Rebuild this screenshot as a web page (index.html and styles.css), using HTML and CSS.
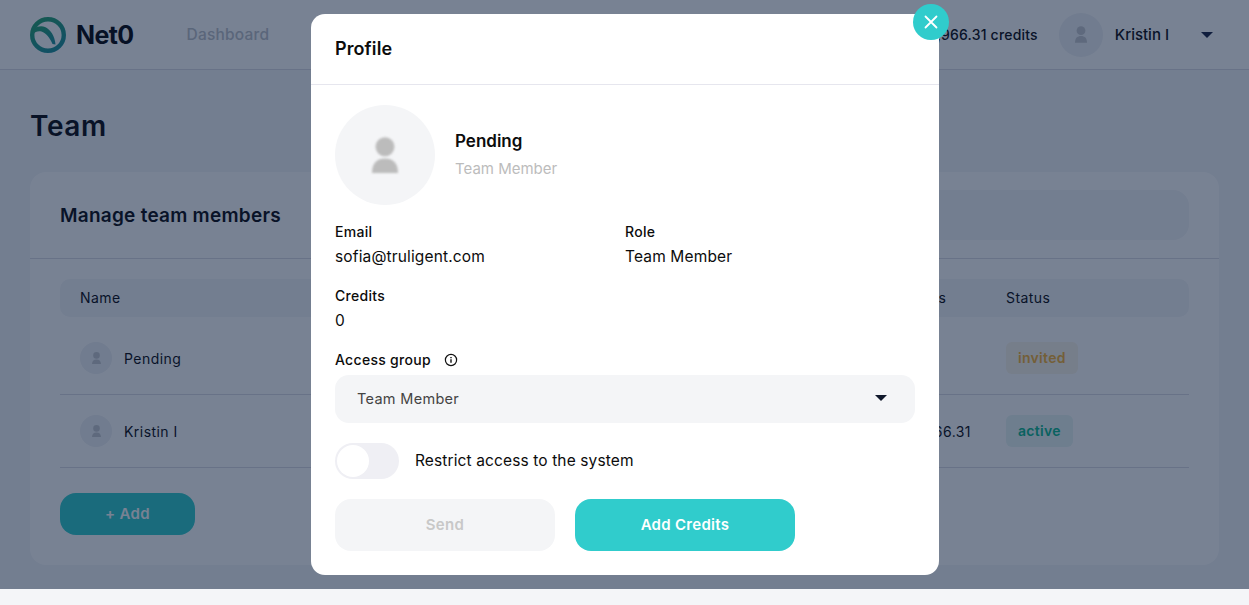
FILE: index.html
```html
<!DOCTYPE html>
<html lang="en">
<head>
<meta charset="utf-8">
<title>Net0 Team</title>
<link rel="stylesheet" href="styles.css">
</head>
<body>
<div class="page">
  <header class="topbar">
    <div class="brand">
      <svg class="logo" viewBox="0 0 36 36" width="36" height="36" fill="none">
        <defs><linearGradient id="lg" x1="0.2" y1="0" x2="0.8" y2="1"><stop offset="0" stop-color="#25a36f"/><stop offset="1" stop-color="#1c8f9c"/></linearGradient></defs>
        <circle cx="18" cy="18" r="15.800" stroke="url(#lg)" stroke-width="4.400"/>
        <path d="M2 13C6 9.500 11 8.500 15 10C20 12 25 19 25.500 27.500L22.500 27C20 21 16 16 11.500 14.500C8 13.500 5 15 3 17Z" fill="url(#lg)"/>
      </svg>
      <span class="brand-name">Net0</span>
    </div>
    <nav class="nav"><span>Dashboard</span></nav>
    <div class="account">
      <span class="credits">12,966.31 credits</span>
      <span class="avatar avatar-lg"><svg viewBox="0 0 26 36" width="12" height="17"><circle cx="13" cy="9.700" r="9.500"/><path d="M0 36C0 26 5 21.500 13 21.500S26 26 26 36z"/></svg></span>
      <span class="user-name">Kristin I</span>
      <span class="caret caret-dark"></span>
    </div>
  </header>
  <main class="content">
    <h1 class="page-title">Team</h1>
    <section class="card">
      <div class="card-head">
        <h2 class="card-title">Manage team members</h2>
        <div class="search"></div>
      </div>
      <div class="table">
        <div class="row row-head">
          <span class="col-name">Name</span>
          <span class="col-credits">Credits</span>
          <span class="col-status">Status</span>
        </div>
        <div class="row">
          <span class="col-name person"><span class="avatar"><svg viewBox="0 0 26 36" width="9" height="12.500"><circle cx="13" cy="9.700" r="9.500"/><path d="M0 36C0 26 5 21.500 13 21.500S26 26 26 36z"/></svg></span>Pending</span>
          <span class="col-credits"></span>
          <span class="col-status"><span class="pill pill-invited">invited</span></span>
        </div>
        <div class="row">
          <span class="col-name person"><span class="avatar"><svg viewBox="0 0 26 36" width="9" height="12.500"><circle cx="13" cy="9.700" r="9.500"/><path d="M0 36C0 26 5 21.500 13 21.500S26 26 26 36z"/></svg></span>Kristin I</span>
          <span class="col-credits">412,966.31</span>
          <span class="col-status"><span class="pill pill-active">active</span></span>
        </div>
      </div>
      <button class="add-btn">+ Add</button>
    </section>
  </main>

  <div class="overlay">
    <div class="modal">
      <button class="close" aria-label="Close"><svg viewBox="0 0 14 14" width="14" height="14" fill="none" stroke="#fff" stroke-width="1.800" stroke-linecap="round"><path d="M1.500 1.500l11 11M12.500 1.500l-11 11"/></svg></button>
      <div class="modal-head">Profile</div>
      <div class="modal-body">
        <div class="profile">
          <span class="big-avatar"><svg viewBox="0 0 26 36" width="26" height="36"><circle cx="13" cy="9.700" r="9.500"/><path d="M0 36C0 26 5 21.500 13 21.500S26 26 26 36z"/></svg></span>
          <div class="profile-text">
            <div class="profile-name">Pending</div>
            <div class="profile-role">Team Member</div>
          </div>
        </div>
        <div class="fields">
          <div class="field"><div class="label">Email</div><div class="value">sofia@truligent.com</div></div>
          <div class="field"><div class="label">Role</div><div class="value">Team Member</div></div>
          <div class="field"><div class="label">Credits</div><div class="value">0</div></div>
        </div>
        <div class="label access">Access group
          <svg class="info" viewBox="0 0 14 14" width="14" height="14" fill="none" stroke="#111" stroke-width="1.200"><circle cx="7" cy="7" r="5.600"/><path d="M7 6.200v3.600" stroke-width="1.400"/><path d="M7 4v1.300" stroke-width="1.400"/></svg>
        </div>
        <div class="select"><span>Team Member</span><span class="caret"></span></div>
        <div class="toggle-row">
          <span class="toggle"><span class="knob"></span></span>
          <span class="toggle-label">Restrict access to the system</span>
        </div>
        <div class="actions">
          <button class="btn btn-off">Send</button>
          <button class="btn btn-on">Add Credits</button>
        </div>
      </div>
    </div>
  </div>
</div>
</body>
</html>
```
FILE: styles.css
```css
* { box-sizing: border-box; }
html, body { margin: 0; padding: 0; }
body {
  height: 605px;
  overflow: hidden;
  background: #f4f5f8;
  color: #0a0a10;
  font-family: Inter, "Liberation Sans", sans-serif;
}
button { font-family: inherit; border: 0; }
.page { position: relative; height: 589px; }

.topbar {
  height: 70px;
  display: flex;
  align-items: center;
  padding: 0 36px 0 30px;
  border-bottom: 1px solid #dcdce5;
  background: #fff;
}
.brand { display: flex; align-items: center; gap: 10px; }
.brand-name { font-size: 25px; font-weight: 700; letter-spacing: -0.6px; color: #05060c; }
.nav { margin-left: 53px; font-size: 15.500px; font-weight: 500; letter-spacing: 0.2px; color: #bdc1c8; flex: 1; }
.account { display: flex; align-items: center; font-size: 14px; font-weight: 500; }
.credits { margin-right: 21px; letter-spacing: 0.2px; }
.avatar {
  width: 32px; height: 32px; border-radius: 50%;
  display: inline-flex; align-items: center; justify-content: center;
  background: #eff1f5;
  fill: #c6c8ce;
  flex: none;
}
.avatar-lg { width: 44px; height: 44px; }
.user-name { margin-left: 12px; margin-right: 32px; font-size: 15px; }
.caret {
  display: inline-block; width: 0; height: 0;
  border-left: 6.500px solid transparent;
  border-right: 6.500px solid transparent;
  border-top: 6px solid #10182b;
}
.caret-dark { border-top-color: #1a2244; }

.content { padding: 38px 30px 0; }
.page-title { margin: 0 0 28px; font-size: 28px; line-height: 36px; font-weight: 600; letter-spacing: 0.6px; }
.card { background: #fff; border-radius: 16px; height: 393px; }
.card-head {
  display: flex; align-items: center; justify-content: space-between;
  height: 87px; padding: 0 30px;
  border-bottom: 1px solid #dcdce5;
}
.card-title { margin: 0; font-size: 19px; font-weight: 600; letter-spacing: 0.25px; }
.search { width: 874px; height: 50px; background: #f4f5f8; border-radius: 16px; }
.table { padding: 20px 30px 0; font-size: 14px; letter-spacing: 0.45px; }
.row {
  display: flex; align-items: center; height: 73px;
  padding: 0 20px;
  border-bottom: 1px solid #dcdce5;
}
.row-head { height: 38px; background: #f4f5f8; border: 0; border-radius: 10px; margin-bottom: 5px; padding-bottom: 1px; }
.col-name { flex: 1; }
.person { display: flex; align-items: center; gap: 12px; }
.col-credits { width: 112px; padding-left: 2px; white-space: nowrap; }
.col-status { width: 163px; }
.pill { display: inline-block; height: 32px; line-height: 32px; padding: 0 12px; border-radius: 6px; font-weight: 600; letter-spacing: 0.3px; }
.pill-invited { background: #fbf5ea; color: #f5b133; }
.pill-active { background: #e8f6f4; color: #0db88f; }
.add-btn {
  display: block; margin: 25px 0 0 30px;
  width: 135px; height: 42px; border-radius: 16px; padding: 0 0 2px;
  background: #30cccc; color: #fff; font-size: 15px; font-weight: 600; letter-spacing: 0.3px;
}

.overlay {
  position: absolute; inset: 0;
  background: rgba(10, 28, 59, 0.55);
  display: flex; justify-content: center; align-items: flex-start;
  padding-top: 14px;
}
.modal {
  position: relative;
  width: 628px; height: 561px;
  margin-left: 1px;
  background: #fff; border-radius: 14px;
}
.close {
  position: absolute; top: -10px; right: -10px;
  width: 36px; height: 36px; border-radius: 50%;
  background: #30cccc;
  display: flex; align-items: center; justify-content: center; padding: 0;
}
.modal-head {
  height: 71px; padding: 0 24px 2px;
  display: flex; align-items: center;
  font-size: 18px; font-weight: 600; letter-spacing: 0.1px; color: #0c0c0c;
  border-bottom: 1px solid #e6e6ee;
}
.modal-body { padding: 20px 24px 0; color: #0c0c0c; }
.profile { display: flex; align-items: center; gap: 20px; }
.big-avatar {
  width: 100px; height: 100px; border-radius: 50%;
  background: #f4f5f7;
  display: flex; align-items: center; justify-content: center;
  fill: #bcbcbc;
  flex: none;
}
.big-avatar svg { filter: blur(0.8px); }
.profile-text { padding-bottom: 3px; }
.profile-name { font-size: 17px; line-height: 24px; font-weight: 600; }
.profile-role { margin-top: 6px; font-size: 15px; line-height: 20px; color: #bcbcbc; }
.fields {
  display: grid; grid-template-columns: 290px 290px;
  row-gap: 15px; margin-top: 17px;
}
.label { font-size: 14px; line-height: 20px; font-weight: 500; letter-spacing: 0.3px; }
.value { margin: 2px 0; font-size: 15.500px; line-height: 25px; letter-spacing: 0.15px; }
.access { display: flex; align-items: center; gap: 13px; margin-top: 15px; }
.info { flex: none; }
.select {
  margin-top: 5px; height: 48px; border-radius: 14px;
  background: #f4f5f7;
  display: flex; align-items: center; justify-content: space-between;
  padding: 0 28px 2px 22px;
  font-size: 14.500px; letter-spacing: 0.3px; color: #444;
}
.toggle-row { display: flex; align-items: center; gap: 16px; margin-top: 20px; }
.toggle {
  width: 64px; height: 36px; border-radius: 18px;
  background: #efeff4; padding: 2px; display: block;
}
.knob { display: block; width: 32px; height: 32px; border-radius: 50%; background: #fff; }
.toggle-label { font-size: 15.500px; letter-spacing: 0.12px; padding-bottom: 2px; }
.actions { display: flex; gap: 20px; margin-top: 20px; }
.btn { width: 220px; height: 52px; border-radius: 16px; font-size: 15px; font-weight: 600; letter-spacing: 0.3px; padding: 0 0 2px; }
.btn-off { background: #f4f5f7; color: #c8c8c8; }
.btn-on { background: #30cccc; color: #fff; }
```
